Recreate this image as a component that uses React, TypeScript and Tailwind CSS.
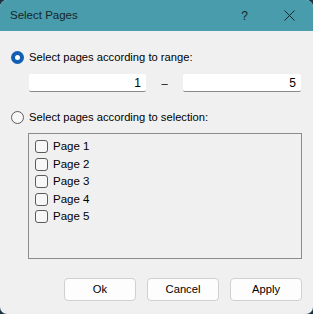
import { useState } from "react";

const pages = ["Page 1", "Page 2", "Page 3", "Page 4", "Page 5"];

function Radio({ checked }: { checked: boolean }) {
    return checked ? (
        <span className="flex h-[13px] w-[13px] items-center justify-center rounded-full bg-[#0f5fb3]">
            <span className="h-[5px] w-[5px] rounded-full bg-white" />
        </span>
    ) : (
        <span className="h-[13px] w-[13px] rounded-full border border-[#5b5b5b] bg-[#f7f7f7]" />
    );
}

export default function App() {
    const [mode, setMode] = useState<"range" | "selection">("range");

    return (
        <div
            className="h-[314px] w-[313px] bg-[#1d3440] text-[11.2px] text-black"
            style={{ fontFamily: '"Liberation Sans", Arial, sans-serif' }}
        >
            <div className="flex h-full w-full flex-col overflow-hidden rounded-[7px] bg-[#f0f0f0]">
                {/* title bar */}
                <div className="flex h-[31px] items-center bg-[#489cab] pl-[10px] text-[#16262c]">
                    <span className="text-[11.5px]">Select Pages</span>
                    <span className="ml-auto mr-[36px] text-[12px]">?</span>
                    <svg width="11" height="11" viewBox="0 0 11 11" className="mr-[18px]">
                        <path d="M0.5 0.5L10.5 10.5M10.5 0.5L0.5 10.5" stroke="#16262c" strokeWidth="1" />
                    </svg>
                </div>

                <div className="flex flex-1 flex-col px-[11px]">
                    <button
                        className="mt-[19px] flex h-[14px] items-center gap-[5px] text-left"
                        onClick={() => setMode("range")}
                    >
                        <Radio checked={mode === "range"} />
                        <span>Select pages according to range:</span>
                    </button>

                    <div className="mt-[10px] flex items-center pl-[18px]">
                        <input
                            defaultValue="1"
                            className="h-[18px] w-[117px] rounded-[2px] border-b border-[#8a8a8a] bg-white px-[5px] text-right text-[12px] outline-none"
                        />
                        <span className="w-[37px] text-center">–</span>
                        <input
                            defaultValue="5"
                            className="h-[18px] w-[118px] rounded-[2px] border-b border-[#8a8a8a] bg-white px-[5px] text-right text-[12px] outline-none"
                        />
                    </div>

                    <button
                        className="mt-[18px] flex h-[14px] items-center gap-[5px] text-left"
                        onClick={() => setMode("selection")}
                    >
                        <Radio checked={mode === "selection"} />
                        <span>Select pages according to selection:</span>
                    </button>

                    <div className="ml-[17px] mt-[9px] flex h-[126px] w-[274px] flex-col border border-[#8c8c8c] pl-[6px] pt-[4px]">
                        {pages.map((p) => (
                            <label key={p} className="flex h-[17.5px] items-center gap-[5px]">
                                <span className="h-[13px] w-[13px] rounded-[3px] border border-[#5b5b5b] bg-[#f7f7f7]" />
                                <span className="text-[11.5px]">{p}</span>
                            </label>
                        ))}
                    </div>

                    <div className="mt-[19px] flex justify-end gap-[11px]">
                        {["Ok", "Cancel", "Apply"].map((b) => (
                            <button
                                key={b}
                                className="h-[23px] w-[72px] rounded-[4px] border border-[#d0d0d0] bg-[#fdfdfd] text-[11.2px]"
                            >
                                {b}
                            </button>
                        ))}
                    </div>
                </div>
            </div>
        </div>
    );
}
